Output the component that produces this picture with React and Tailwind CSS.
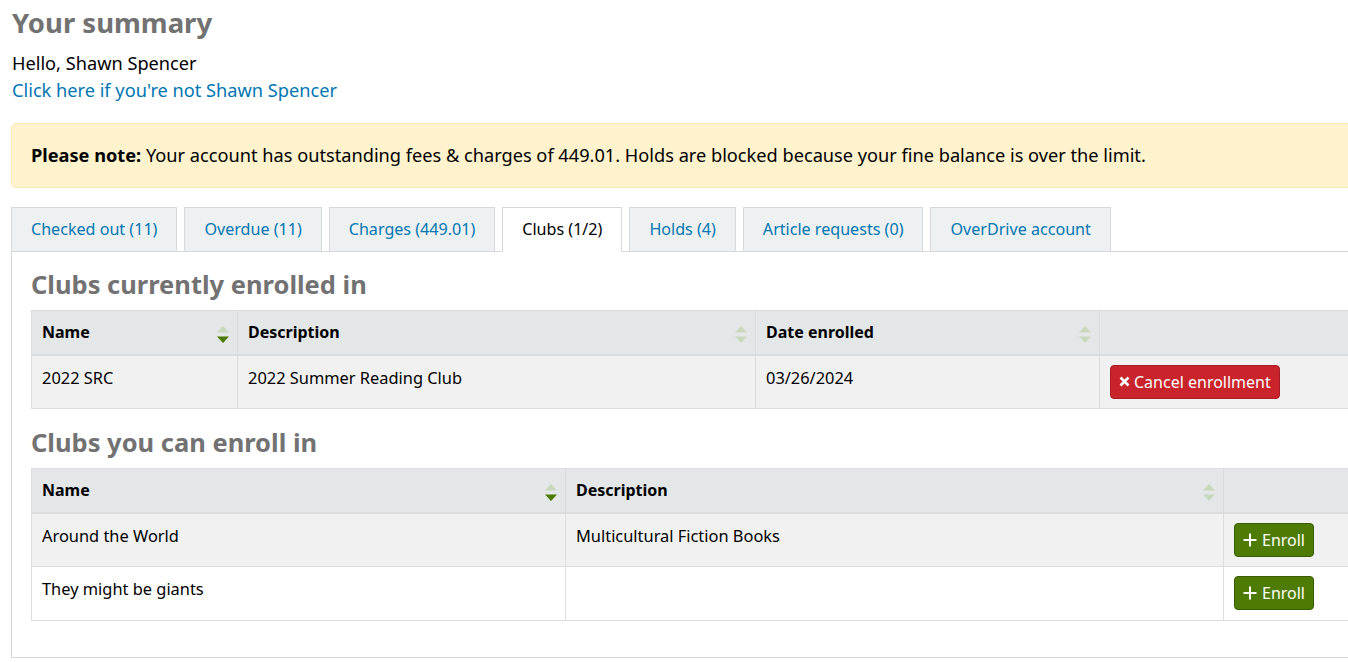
import React from 'react';

const font = { fontFamily: '"Noto Sans", "Open Sans", sans-serif' };

// Sort arrows shown in the table header cells
const SortIcon = ({ active }) => (
  <svg width="12" height="17" viewBox="0 0 12 17" className="absolute right-[8px] top-[15px]">
    <path d="M0 6.5 L6 0 L12 6.5 Z" fill="#c9d7bd" />
    <path d="M0 10.5 L6 17 L12 10.5 Z" fill={active ? '#4c7a00' : '#c9d7bd'} />
  </svg>
);

const Th = ({ children, sort, active }) => (
  <th className="relative h-[44px] px-[10px] text-left align-middle font-bold text-black bg-[#e3e7e7] border-r border-[#d8dcdc] border-b-2 border-b-[#d9dddd]">
    {children}
    {sort && <SortIcon active={active} />}
  </th>
);

const Td = ({ children }) => (
  <td className="px-[10px] pt-[10px] align-top text-[16.4px] border-r border-b border-[#dddddd]">{children}</td>
);

const tabs = [
  { label: 'Checked out (11)' },
  { label: 'Overdue (11)' },
  { label: 'Charges (449.01)' },
  { label: 'Clubs (1/2)', active: true },
  { label: 'Holds (4)' },
  { label: 'Article requests (0)' },
  { label: 'OverDrive account' },
];

export default function App() {
  return (
    <div className="w-[1348px] h-[662px] overflow-hidden bg-white text-black text-[16px]" style={font}>
      <div className="w-[1420px] pl-[11px]">
        <h1 className="pl-[1px] pt-[6px] text-[27.5px] leading-[34px] font-bold text-[#727272]">Your summary</h1>
        <p className="mt-[10px] pl-[1px] text-[18.2px] leading-[27px]">Hello, Shawn Spencer</p>
        <a href="#" className="block pl-[1px] text-[18.2px] leading-[27px] text-[#0076b2]">
          Click here if you're not Shawn Spencer
        </a>

        <div className="mt-[19px] h-[65px] flex items-center px-[19px] bg-[#fef3cd] border border-[#fbe8b2] rounded-[5px]">
          <p className="text-[18.2px] leading-[27px]">
            <strong className="font-bold">Please note:</strong> Your account has outstanding fees &amp; charges of
            449.01. Holds are blocked because your fine balance is over the limit.
          </p>
        </div>

        <div className="mt-[19px] flex gap-[7px] text-[16.1px]">
          {tabs.map((t) => (
            <div
              key={t.label}
              className={`-mb-px h-[45px] pb-px flex items-center px-[19px] border border-[#d6d9d9] ${
                t.active ? 'bg-white border-b-white text-black' : 'bg-[#eef1f1] text-[#0076b2]'
              }`}
            >
              {t.label}
            </div>
          ))}
        </div>

        <div className="border border-[#d6d9d9] pl-[19px] pt-[17px] pb-[36px]">
          <h2 className="text-[25.5px] leading-[31px] font-bold text-[#727272]">Clubs currently enrolled in</h2>
          <table className="mt-[10px] table-fixed border-collapse w-[1380px] border-l border-t border-[#dddddd]">
            <colgroup>
              <col className="w-[206px]" />
              <col className="w-[518px]" />
              <col className="w-[344px]" />
              <col />
            </colgroup>
            <thead>
              <tr>
                <Th sort active>Name</Th>
                <Th sort>Description</Th>
                <Th sort>Date enrolled</Th>
                <Th />
              </tr>
            </thead>
            <tbody>
              <tr className="h-[54px] bg-[#f1f1f1] leading-[24px]">
                <Td>2022 SRC</Td>
                <Td>2022 Summer Reading Club</Td>
                <Td>03/26/2024</Td>
                <Td>
                  <button className="-mt-px h-[34px] px-[8px] flex items-center gap-[4px] rounded-[4px] bg-[#c9232b] border border-[#a81d23] text-white text-[16px] leading-none">
                    <svg width="11" height="11" viewBox="0 0 11 11">
                      <path d="M1.5 1.5 L9.5 9.5 M9.5 1.5 L1.5 9.5" stroke="white" strokeWidth="2.6" />
                    </svg>
                    Cancel enrollment
                  </button>
                </Td>
              </tr>
            </tbody>
          </table>

          <h2 className="mt-[18px] text-[25.5px] leading-[31px] font-bold text-[#727272]">Clubs you can enroll in</h2>
          <table className="mt-[10px] table-fixed border-collapse w-[1380px] border-l border-t border-[#dddddd]">
            <colgroup>
              <col className="w-[534px]" />
              <col className="w-[658px]" />
              <col />
            </colgroup>
            <thead>
              <tr>
                <Th sort active>Name</Th>
                <Th sort>Description</Th>
                <Th />
              </tr>
            </thead>
            <tbody className="leading-[24px]">
              {[
                { name: 'Around the World', desc: 'Multicultural Fiction Books', bg: 'bg-[#f1f1f1]' },
                { name: 'They might be giants', desc: '', bg: 'bg-white' },
              ].map((r) => (
                <tr key={r.name} className={`h-[54px] ${r.bg}`}>
                  <Td>{r.name}</Td>
                  <Td>{r.desc}</Td>
                  <Td>
                    <button className="-mt-px h-[34px] w-[80px] flex items-center justify-center gap-[5px] rounded-[4px] bg-[#4e7b04] border border-[#3a5c00] text-white text-[16px] leading-none">
                      <svg width="14" height="14" viewBox="0 0 14 14">
                        <path d="M7 0.5 V13.5 M0.5 7 H13.5" stroke="white" strokeWidth="2" />
                      </svg>
                      Enroll
                    </button>
                  </Td>
                </tr>
              ))}
            </tbody>
          </table>
        </div>
      </div>
    </div>
  );
}
